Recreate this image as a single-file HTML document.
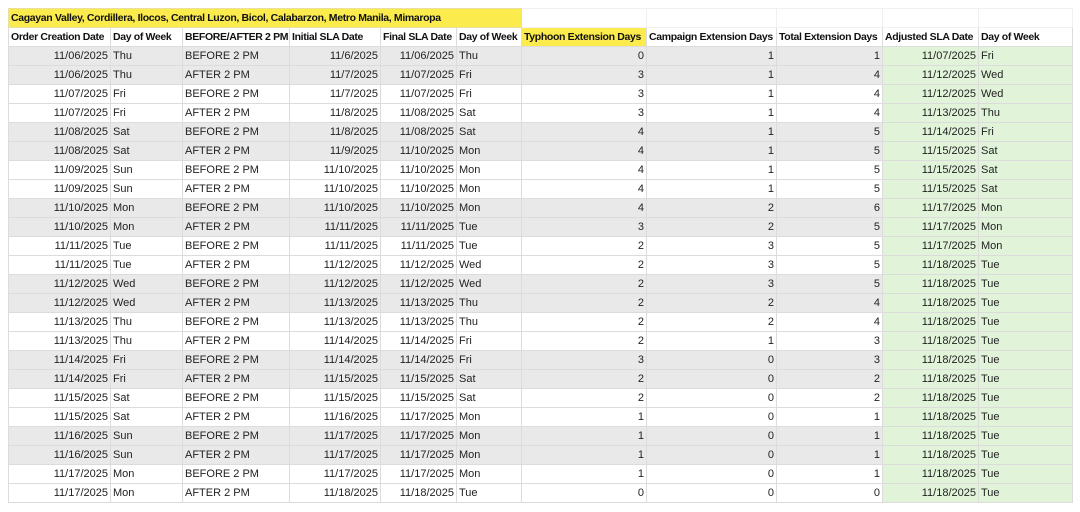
<!DOCTYPE html>
<html><head><meta charset="utf-8"><style>
body{margin:0;background:#fff;width:1080px;height:512px;overflow:hidden;font-family:"Liberation Sans",sans-serif;font-size:11px;color:#222}
table{position:absolute;left:8px;top:8px;border-collapse:collapse;table-layout:fixed;width:1064px}
td{height:18px;padding:0 2px;border:1px solid #dcdcdc;white-space:nowrap;overflow:hidden;line-height:18px}
tr.t td{border-color:#f0f0f0}
tr.h td{font-weight:bold;color:#111;font-size:10.5px;letter-spacing:-0.35px}
.r{text-align:right}
tr.g td{background:#e9e9e9}
td.gr,tr.g td.gr{background:#e1f4da}
.y{background:#fbeb4c!important}
</style></head><body>
<table>
<colgroup><col style="width:102px"><col style="width:72px"><col style="width:107px"><col style="width:91px"><col style="width:76px"><col style="width:65px"><col style="width:125px"><col style="width:130px"><col style="width:106px"><col style="width:96px"><col style="width:94px"></colgroup>
<tr class="t h"><td colspan="6" class="y" style="border-color:#e8e0a0">Cagayan Valley, Cordillera, Ilocos, Central Luzon, Bicol, Calabarzon, Metro Manila, Mimaropa</td><td></td><td></td><td></td><td></td><td></td></tr>
<tr class="h"><td>Order Creation Date</td><td>Day of Week</td><td>BEFORE/AFTER 2 PM</td><td>Initial SLA Date</td><td>Final SLA Date</td><td>Day of Week</td><td class="y">Typhoon Extension Days</td><td>Campaign Extension Days</td><td>Total Extension Days</td><td>Adjusted SLA Date</td><td>Day of Week</td></tr>
<tr class="g"><td class="r">11/06/2025</td><td>Thu</td><td>BEFORE 2 PM</td><td class="r">11/6/2025</td><td class="r">11/06/2025</td><td>Thu</td><td class="r">0</td><td class="r">1</td><td class="r">1</td><td class="r gr">11/07/2025</td><td class="gr">Fri</td></tr>
<tr class="g"><td class="r">11/06/2025</td><td>Thu</td><td>AFTER 2 PM</td><td class="r">11/7/2025</td><td class="r">11/07/2025</td><td>Fri</td><td class="r">3</td><td class="r">1</td><td class="r">4</td><td class="r gr">11/12/2025</td><td class="gr">Wed</td></tr>
<tr><td class="r">11/07/2025</td><td>Fri</td><td>BEFORE 2 PM</td><td class="r">11/7/2025</td><td class="r">11/07/2025</td><td>Fri</td><td class="r">3</td><td class="r">1</td><td class="r">4</td><td class="r gr">11/12/2025</td><td class="gr">Wed</td></tr>
<tr><td class="r">11/07/2025</td><td>Fri</td><td>AFTER 2 PM</td><td class="r">11/8/2025</td><td class="r">11/08/2025</td><td>Sat</td><td class="r">3</td><td class="r">1</td><td class="r">4</td><td class="r gr">11/13/2025</td><td class="gr">Thu</td></tr>
<tr class="g"><td class="r">11/08/2025</td><td>Sat</td><td>BEFORE 2 PM</td><td class="r">11/8/2025</td><td class="r">11/08/2025</td><td>Sat</td><td class="r">4</td><td class="r">1</td><td class="r">5</td><td class="r gr">11/14/2025</td><td class="gr">Fri</td></tr>
<tr class="g"><td class="r">11/08/2025</td><td>Sat</td><td>AFTER 2 PM</td><td class="r">11/9/2025</td><td class="r">11/10/2025</td><td>Mon</td><td class="r">4</td><td class="r">1</td><td class="r">5</td><td class="r gr">11/15/2025</td><td class="gr">Sat</td></tr>
<tr><td class="r">11/09/2025</td><td>Sun</td><td>BEFORE 2 PM</td><td class="r">11/10/2025</td><td class="r">11/10/2025</td><td>Mon</td><td class="r">4</td><td class="r">1</td><td class="r">5</td><td class="r gr">11/15/2025</td><td class="gr">Sat</td></tr>
<tr><td class="r">11/09/2025</td><td>Sun</td><td>AFTER 2 PM</td><td class="r">11/10/2025</td><td class="r">11/10/2025</td><td>Mon</td><td class="r">4</td><td class="r">1</td><td class="r">5</td><td class="r gr">11/15/2025</td><td class="gr">Sat</td></tr>
<tr class="g"><td class="r">11/10/2025</td><td>Mon</td><td>BEFORE 2 PM</td><td class="r">11/10/2025</td><td class="r">11/10/2025</td><td>Mon</td><td class="r">4</td><td class="r">2</td><td class="r">6</td><td class="r gr">11/17/2025</td><td class="gr">Mon</td></tr>
<tr class="g"><td class="r">11/10/2025</td><td>Mon</td><td>AFTER 2 PM</td><td class="r">11/11/2025</td><td class="r">11/11/2025</td><td>Tue</td><td class="r">3</td><td class="r">2</td><td class="r">5</td><td class="r gr">11/17/2025</td><td class="gr">Mon</td></tr>
<tr><td class="r">11/11/2025</td><td>Tue</td><td>BEFORE 2 PM</td><td class="r">11/11/2025</td><td class="r">11/11/2025</td><td>Tue</td><td class="r">2</td><td class="r">3</td><td class="r">5</td><td class="r gr">11/17/2025</td><td class="gr">Mon</td></tr>
<tr><td class="r">11/11/2025</td><td>Tue</td><td>AFTER 2 PM</td><td class="r">11/12/2025</td><td class="r">11/12/2025</td><td>Wed</td><td class="r">2</td><td class="r">3</td><td class="r">5</td><td class="r gr">11/18/2025</td><td class="gr">Tue</td></tr>
<tr class="g"><td class="r">11/12/2025</td><td>Wed</td><td>BEFORE 2 PM</td><td class="r">11/12/2025</td><td class="r">11/12/2025</td><td>Wed</td><td class="r">2</td><td class="r">3</td><td class="r">5</td><td class="r gr">11/18/2025</td><td class="gr">Tue</td></tr>
<tr class="g"><td class="r">11/12/2025</td><td>Wed</td><td>AFTER 2 PM</td><td class="r">11/13/2025</td><td class="r">11/13/2025</td><td>Thu</td><td class="r">2</td><td class="r">2</td><td class="r">4</td><td class="r gr">11/18/2025</td><td class="gr">Tue</td></tr>
<tr><td class="r">11/13/2025</td><td>Thu</td><td>BEFORE 2 PM</td><td class="r">11/13/2025</td><td class="r">11/13/2025</td><td>Thu</td><td class="r">2</td><td class="r">2</td><td class="r">4</td><td class="r gr">11/18/2025</td><td class="gr">Tue</td></tr>
<tr><td class="r">11/13/2025</td><td>Thu</td><td>AFTER 2 PM</td><td class="r">11/14/2025</td><td class="r">11/14/2025</td><td>Fri</td><td class="r">2</td><td class="r">1</td><td class="r">3</td><td class="r gr">11/18/2025</td><td class="gr">Tue</td></tr>
<tr class="g"><td class="r">11/14/2025</td><td>Fri</td><td>BEFORE 2 PM</td><td class="r">11/14/2025</td><td class="r">11/14/2025</td><td>Fri</td><td class="r">3</td><td class="r">0</td><td class="r">3</td><td class="r gr">11/18/2025</td><td class="gr">Tue</td></tr>
<tr class="g"><td class="r">11/14/2025</td><td>Fri</td><td>AFTER 2 PM</td><td class="r">11/15/2025</td><td class="r">11/15/2025</td><td>Sat</td><td class="r">2</td><td class="r">0</td><td class="r">2</td><td class="r gr">11/18/2025</td><td class="gr">Tue</td></tr>
<tr><td class="r">11/15/2025</td><td>Sat</td><td>BEFORE 2 PM</td><td class="r">11/15/2025</td><td class="r">11/15/2025</td><td>Sat</td><td class="r">2</td><td class="r">0</td><td class="r">2</td><td class="r gr">11/18/2025</td><td class="gr">Tue</td></tr>
<tr><td class="r">11/15/2025</td><td>Sat</td><td>AFTER 2 PM</td><td class="r">11/16/2025</td><td class="r">11/17/2025</td><td>Mon</td><td class="r">1</td><td class="r">0</td><td class="r">1</td><td class="r gr">11/18/2025</td><td class="gr">Tue</td></tr>
<tr class="g"><td class="r">11/16/2025</td><td>Sun</td><td>BEFORE 2 PM</td><td class="r">11/17/2025</td><td class="r">11/17/2025</td><td>Mon</td><td class="r">1</td><td class="r">0</td><td class="r">1</td><td class="r gr">11/18/2025</td><td class="gr">Tue</td></tr>
<tr class="g"><td class="r">11/16/2025</td><td>Sun</td><td>AFTER 2 PM</td><td class="r">11/17/2025</td><td class="r">11/17/2025</td><td>Mon</td><td class="r">1</td><td class="r">0</td><td class="r">1</td><td class="r gr">11/18/2025</td><td class="gr">Tue</td></tr>
<tr><td class="r">11/17/2025</td><td>Mon</td><td>BEFORE 2 PM</td><td class="r">11/17/2025</td><td class="r">11/17/2025</td><td>Mon</td><td class="r">1</td><td class="r">0</td><td class="r">1</td><td class="r gr">11/18/2025</td><td class="gr">Tue</td></tr>
<tr><td class="r">11/17/2025</td><td>Mon</td><td>AFTER 2 PM</td><td class="r">11/18/2025</td><td class="r">11/18/2025</td><td>Tue</td><td class="r">0</td><td class="r">0</td><td class="r">0</td><td class="r gr">11/18/2025</td><td class="gr">Tue</td></tr>
</table>
</body></html>
